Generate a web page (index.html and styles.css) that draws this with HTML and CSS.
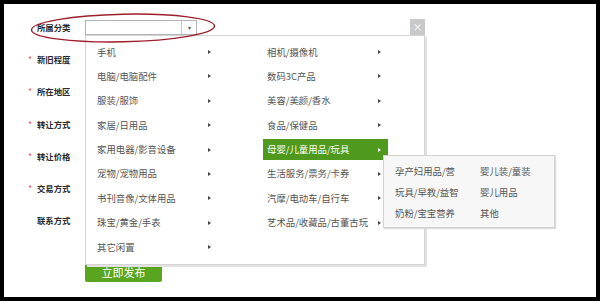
FILE: index.html
```html
<!DOCTYPE html>
<html lang="zh-CN">
<head>
<meta charset="utf-8">
<link rel="stylesheet" href="styles.css">
</head>
<body>
<div class="frame">
  <div class="form">
    <div class="row">
      <div class="label">所属分类</div>
      <div class="select"><span class="select-text"></span><span class="select-arrow">▾</span></div>
    </div>
    <div class="row"><div class="label"><span class="star">*</span>新旧程度</div></div>
    <div class="row"><div class="label"><span class="star">*</span>所在地区</div></div>
    <div class="row"><div class="label"><span class="star">*</span>转让方式</div></div>
    <div class="row"><div class="label"><span class="star">*</span>转让价格</div></div>
    <div class="row"><div class="label"><span class="star">*</span>交易方式</div></div>
    <div class="row"><div class="label">联系方式</div></div>
    <div class="btn-row"><button class="submit">立即发布</button></div>
  </div>

  <svg class="ellipse" width="190" height="36" viewBox="0 0 190 36">
    <ellipse cx="95" cy="18" rx="91.5" ry="13.8" fill="none" stroke="#9e1f2c" stroke-width="1.4" transform="rotate(-1.2 95 18)"/>
  </svg>

  <div class="panel">
    <div class="close">×</div>
    <div class="cols">
      <ul class="col">
        <li class="item">手机<i class="arr"></i></li>
        <li class="item">电脑/电脑配件<i class="arr"></i></li>
        <li class="item">服装/服饰<i class="arr"></i></li>
        <li class="item">家居/日用品<i class="arr"></i></li>
        <li class="item">家用电器/影音设备<i class="arr"></i></li>
        <li class="item">宠物/宠物用品<i class="arr"></i></li>
        <li class="item">书刊音像/文体用品<i class="arr"></i></li>
        <li class="item">珠宝/黄金/手表<i class="arr"></i></li>
        <li class="item">其它闲置<i class="arr"></i></li>
      </ul>
      <ul class="col">
        <li class="item">相机/摄像机<i class="arr"></i></li>
        <li class="item">数码3C产品<i class="arr"></i></li>
        <li class="item">美容/美颜/香水<i class="arr"></i></li>
        <li class="item">食品/保健品<i class="arr"></i></li>
        <li class="item active">母婴/儿童用品/玩具<i class="arr"></i></li>
        <li class="item">生活服务/票务/卡券<i class="arr"></i></li>
        <li class="item">汽摩/电动车/自行车<i class="arr"></i></li>
        <li class="item">艺术品/收藏品/古董古玩<i class="arr"></i></li>
      </ul>
    </div>
  </div>

  <div class="submenu">
    <span>孕产妇用品/营</span><span>婴儿装/童装</span>
    <span>玩具/早教/益智</span><span>婴儿用品</span>
    <span>奶粉/宝宝营养</span><span>其他</span>
  </div>
</div>
</body>
</html>
```
FILE: styles.css
```css
html, body {
  margin: 0;
  padding: 0;
  background: #000;
}
body {
  width: 600px;
  height: 301px;
  overflow: hidden;
  font-family: "Noto Sans CJK SC", "Noto Sans", sans-serif;
}
.frame {
  position: relative;
  margin: 4px 4px 0 4px;
  width: 592px;
  height: 293px;
  background: #fff;
}
.form {
  padding: 7px 0 0 24px;
}
.row {
  height: 32.2px;
  display: flex;
  align-items: center;
}
.label {
  width: 57px;
  box-sizing: border-box;
  padding-left: 9px;
  position: relative;
  font-size: 8.4px;
  font-weight: bold;
  color: #2a2a2a;
  line-height: 12px;
}
.star {
  position: absolute;
  left: 0;
  top: 1px;
  color: #e0606a;
  font-weight: normal;
  font-size: 9px;
}
.select {
  width: 112px;
  height: 15px;
  box-sizing: border-box;
  border: 1px solid #b4b4b4;
  display: flex;
  background: #fff;
}
.select-text { flex: 1; }
.select-arrow {
  width: 14px;
  border-left: 1px solid #c8c8c8;
  font-size: 6px;
  color: #555;
  text-align: center;
  line-height: 13px;
}
.btn-row {
  margin-top: 25.6px;
  padding-left: 57px;
}
.submit {
  display: block;
  width: 77px;
  height: 20px;
  border: 0;
  border-radius: 2px;
  background: #5aa51f;
  color: #fff;
  font-family: inherit;
  font-size: 11px;
  padding: 0;
  line-height: 20px;
}
.ellipse {
  position: absolute;
  left: 24px;
  top: 5.5px;
  z-index: 3;
}
.panel {
  position: absolute;
  left: 81px;
  top: 31px;
  width: 340px;
  height: 230px;
  box-sizing: border-box;
  background: #fff;
  border: 1px solid #d4d4d4;
  box-shadow: 2px 2px 0 #e2e2e2;
}
.close {
  position: absolute;
  right: -1px;
  top: -17px;
  width: 15px;
  height: 16px;
  background: #c9c9c9;
  color: #fff;
  font-size: 10px;
  line-height: 15px;
  text-align: center;
}
.cols {
  display: flex;
  gap: 45px;
  padding: 5.5px 0 0 7px;
}
.col {
  list-style: none;
  margin: 0;
  padding: 0;
  width: 125px;
  display: flex;
  flex-direction: column;
  gap: 3.4px;
}
.item {
  position: relative;
  height: 21px;
  line-height: 21px;
  padding-left: 4px;
  font-size: 9.4px;
  color: #555;
  white-space: nowrap;
}
.arr {
  position: absolute;
  right: 7px;
  top: 8.5px;
  width: 0;
  height: 0;
  border-left: 3px solid #444;
  border-top: 2px solid transparent;
  border-bottom: 2px solid transparent;
}
.item.active {
  background: #4f9a1c;
  color: #fff;
}
.item.active .arr {
  border-left-color: #fff;
}
.submenu {
  position: absolute;
  left: 379px;
  top: 151px;
  width: 172px;
  height: 73px;
  box-sizing: border-box;
  background: #f7f7f7;
  border: 1px solid #d2d2d2;
  box-shadow: 1px 1px 1px #ddd;
  padding: 4px 0 0 11px;
  display: grid;
  grid-template-columns: 85px 1fr;
  grid-auto-rows: 21px;
  align-items: center;
  font-size: 9.4px;
  color: #555;
  white-space: nowrap;
}
```
